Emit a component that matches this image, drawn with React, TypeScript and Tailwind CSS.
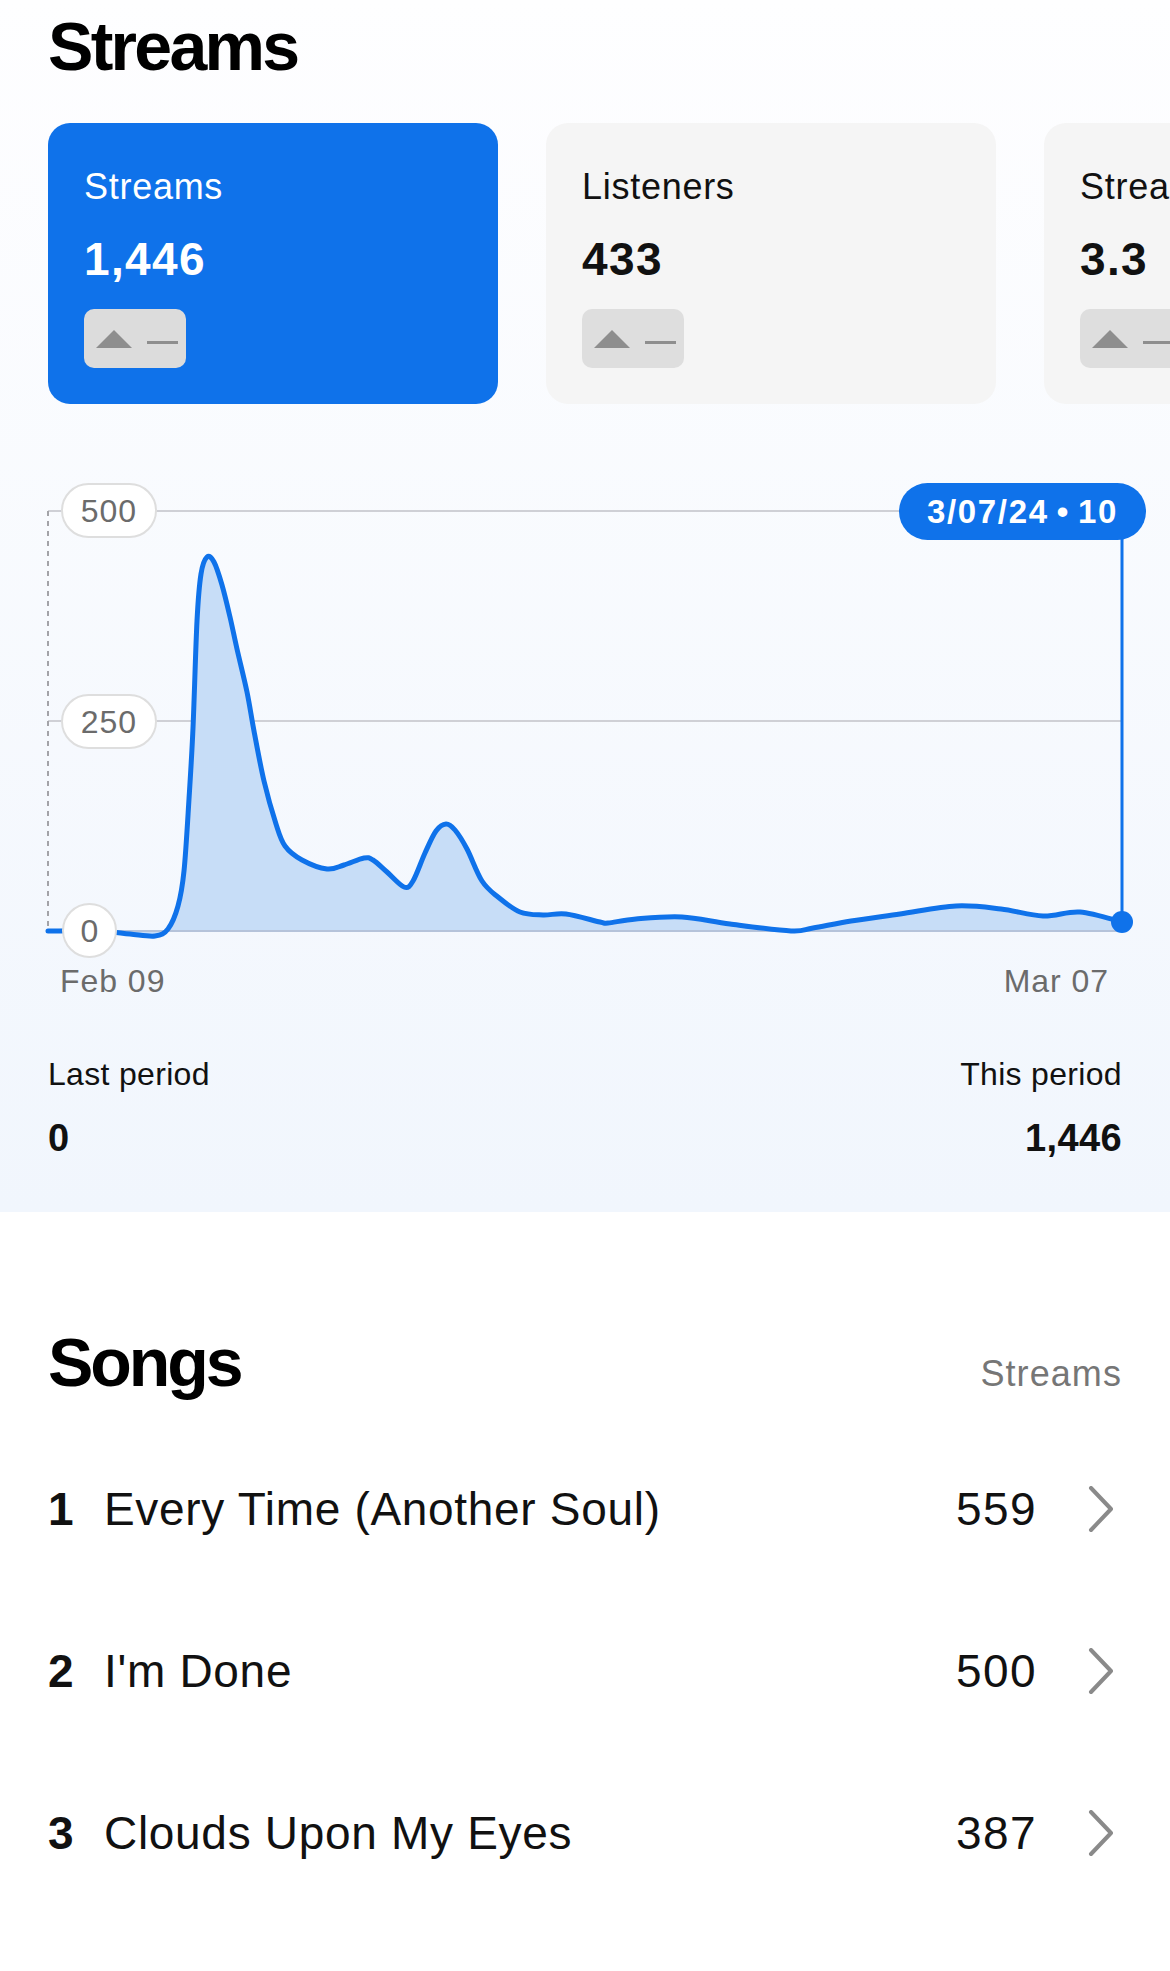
import React from "react";

type Point = [number, number];

// streams per day, already in page coordinates (x, y)
const curve: Point[] = [
  [48, 931], [100, 931], [130, 934], [155, 936], [168, 929], [178, 906],
  [184, 871], [189, 799], [193, 728], [197, 621], [201, 574], [207, 557],
  [214, 562], [222, 585], [230, 617], [237, 649], [247, 692], [254, 731],
  [264, 781], [276, 824], [285, 846], [302, 860], [327, 869], [344, 865],
  [364, 858], [373, 860], [387, 872], [404, 887], [413, 881], [425, 853],
  [436, 831], [446, 824], [455, 830], [467, 849], [482, 881], [498, 897],
  [520, 912], [543, 915], [566, 914], [600, 922], [608, 923], [636, 919],
  [682, 917], [730, 924], [791, 931], [813, 928], [851, 921], [900, 914],
  [956, 906], [1001, 909], [1043, 916], [1080, 912], [1122, 922],
];

const smoothPath = (pts: Point[]) => {
  let d = `M${pts[0][0]},${pts[0][1]}`;
  for (let i = 0; i < pts.length - 1; i++) {
    const p0 = pts[i - 1] || pts[i];
    const p1 = pts[i];
    const p2 = pts[i + 1];
    const p3 = pts[i + 2] || p2;
    const c1x = p1[0] + (p2[0] - p0[0]) / 6;
    const c1y = p1[1] + (p2[1] - p0[1]) / 6;
    const c2x = p2[0] - (p3[0] - p1[0]) / 6;
    const c2y = p2[1] - (p3[1] - p1[1]) / 6;
    d += ` C${c1x},${c1y} ${c2x},${c2y} ${p2[0]},${p2[1]}`;
  }
  return d;
};

const linePath = smoothPath(curve);
const areaPath = `${linePath} L1122,931 L48,931 Z`;

const songs = [
  { rank: 1, title: "Every Time (Another Soul)", streams: "559" },
  { rank: 2, title: "I'm Done", streams: "500" },
  { rank: 3, title: "Clouds Upon My Eyes", streams: "387" },
];

interface StatCardProps {
  label: string;
  value: string;
  active?: boolean;
}

const StatCard: React.FC<StatCardProps> = ({ label, value, active }) => (
  <div
    className={`w-[450px] h-[281px] shrink-0 rounded-[22px] pl-9 pt-[46px] ${
      active ? "bg-[#0f72ea] text-white" : "bg-[#f5f5f5] text-[#111]"
    }`}
  >
    <div className="text-[36px] leading-none whitespace-nowrap tracking-[0.02em]">
      {label}
    </div>
    <div className="mt-[31px] text-[46px] leading-none font-bold tracking-[0.03em]">
      {value}
    </div>
    <div
      className={`mt-[27px] w-[102px] h-[59px] rounded-[10px] flex items-center pl-3 ${
        active ? "bg-[#dcdcdc]" : "bg-[#dedede]"
      }`}
    >
      <svg width="36" height="18" viewBox="0 0 36 18">
        <polygon points="0,18 18,0 36,18" fill="#8e8e8e" />
      </svg>
      <div className="ml-[15px] mt-2 w-[31px] h-[3px] bg-[#8e8e8e]" />
    </div>
  </div>
);

const Chevron = () => (
  <svg width="34" height="46" viewBox="0 0 34 46" className="shrink-0">
    <path
      d="M3 2 L23 23 L3 44"
      fill="none"
      stroke="#8a8a8a"
      strokeWidth="4"
      strokeLinecap="round"
      strokeLinejoin="round"
    />
  </svg>
);

const App: React.FC = () => {
  return (
    <div className="min-h-screen w-full bg-white overflow-x-hidden font-['Liberation_Sans',Arial,sans-serif] text-[#111]">
      {/* Streams overview */}
      <section className="px-12 pt-3 pb-[55px] bg-gradient-to-b from-[#fefeff] to-[#f1f6fd] overflow-hidden">
        <h1 className="text-[68px] leading-none font-bold tracking-[-0.04em] text-black">
          Streams
        </h1>

        <div className="mt-[43px] flex gap-12">
          <StatCard label="Streams" value="1,446" active />
          <StatCard label="Listeners" value="433" />
          <StatCard label="Streams / listener" value="3.3" />
        </div>

        {/* Chart */}
        <div className="relative -mx-12 mt-[56px] h-[505px]">
          <svg
            className="block w-full h-full"
            viewBox="0 460 1170 505"
            preserveAspectRatio="none"
          >
            <line x1="48" y1="511" x2="1122" y2="511" stroke="#cfd0d6" strokeWidth="2" />
            <line x1="48" y1="721" x2="1122" y2="721" stroke="#cfd0d6" strokeWidth="2" />
            <line
              x1="48"
              y1="511"
              x2="48"
              y2="931"
              stroke="#a3a3a8"
              strokeWidth="2"
              strokeDasharray="5 5"
            />
            <path d={areaPath} fill="#c7ddf7" />
            <line x1="48" y1="931" x2="1122" y2="931" stroke="#b5c3da" strokeWidth="2" />
            <path
              d={linePath}
              fill="none"
              stroke="#0f72ea"
              strokeWidth="5"
              strokeLinejoin="round"
              strokeLinecap="round"
            />
            <line x1="1122" y1="530" x2="1122" y2="922" stroke="#0f72ea" strokeWidth="3" />
            <circle cx="1122" cy="922" r="11" fill="#0f72ea" />
          </svg>

          <div className="absolute left-[61px] top-[23px] w-[96px] h-[55px] rounded-full border-[2.5px] border-[#dedede] bg-white flex items-center justify-center text-[32px] leading-none text-[#6b6b6b] tracking-[0.03em]">
            500
          </div>
          <div className="absolute left-[61px] top-[234px] w-[96px] h-[55px] rounded-full border-[2.5px] border-[#dedede] bg-white flex items-center justify-center text-[32px] leading-none text-[#6b6b6b] tracking-[0.03em]">
            250
          </div>
          <div className="absolute left-[62px] top-[443px] w-[55px] h-[55px] rounded-full border-[2.5px] border-[#dedede] bg-white flex items-center justify-center text-[32px] leading-none text-[#6b6b6b]">
            0
          </div>
          <div className="absolute left-[899px] top-[23px] w-[247px] h-[57px] rounded-full bg-[#0f72ea] flex items-center justify-center text-[33px] leading-none font-bold text-white tracking-[0.05em] whitespace-nowrap">
            3/07/24 <span className="mx-[8px]">•</span> 10
          </div>
        </div>

        <div className="flex justify-between pl-3 pr-[13px] text-[32px] leading-none text-[#6b6b6b] tracking-[0.03em]">
          <span>Feb 09</span>
          <span>Mar 07</span>
        </div>

        <div className="mt-[61px] flex justify-between tracking-[0.02em]">
          <div>
            <div className="text-[32px] leading-none">Last period</div>
            <div className="mt-[29px] text-[38px] leading-none font-bold">0</div>
          </div>
          <div className="text-right">
            <div className="text-[32px] leading-none">This period</div>
            <div className="mt-[29px] text-[38px] leading-none font-bold tracking-[0.01em]">
              1,446
            </div>
          </div>
        </div>
      </section>

      {/* Songs */}
      <section className="px-12 pt-[116px] bg-white">
        <div className="flex items-baseline justify-between">
          <h2 className="text-[68px] leading-none font-bold tracking-[-0.045em] text-black">
            Songs
          </h2>
          <span className="text-[36px] leading-none text-[#767676] tracking-[0.03em]">
            Streams
          </span>
        </div>

        <ul className="mt-8">
          {songs.map((song) => (
            <li key={song.rank} className="h-[162px] flex items-center">
              <span className="w-[56px] text-[46px] leading-none font-bold">
                {song.rank}
              </span>
              <span className="flex-1 text-[46px] leading-none whitespace-nowrap tracking-[0.015em]">
                {song.title}
              </span>
              <span className="mr-[51px] text-[46px] leading-none tracking-[0.03em]">
                {song.streams}
              </span>
              <Chevron />
            </li>
          ))}
        </ul>
      </section>
    </div>
  );
};

export default App;
